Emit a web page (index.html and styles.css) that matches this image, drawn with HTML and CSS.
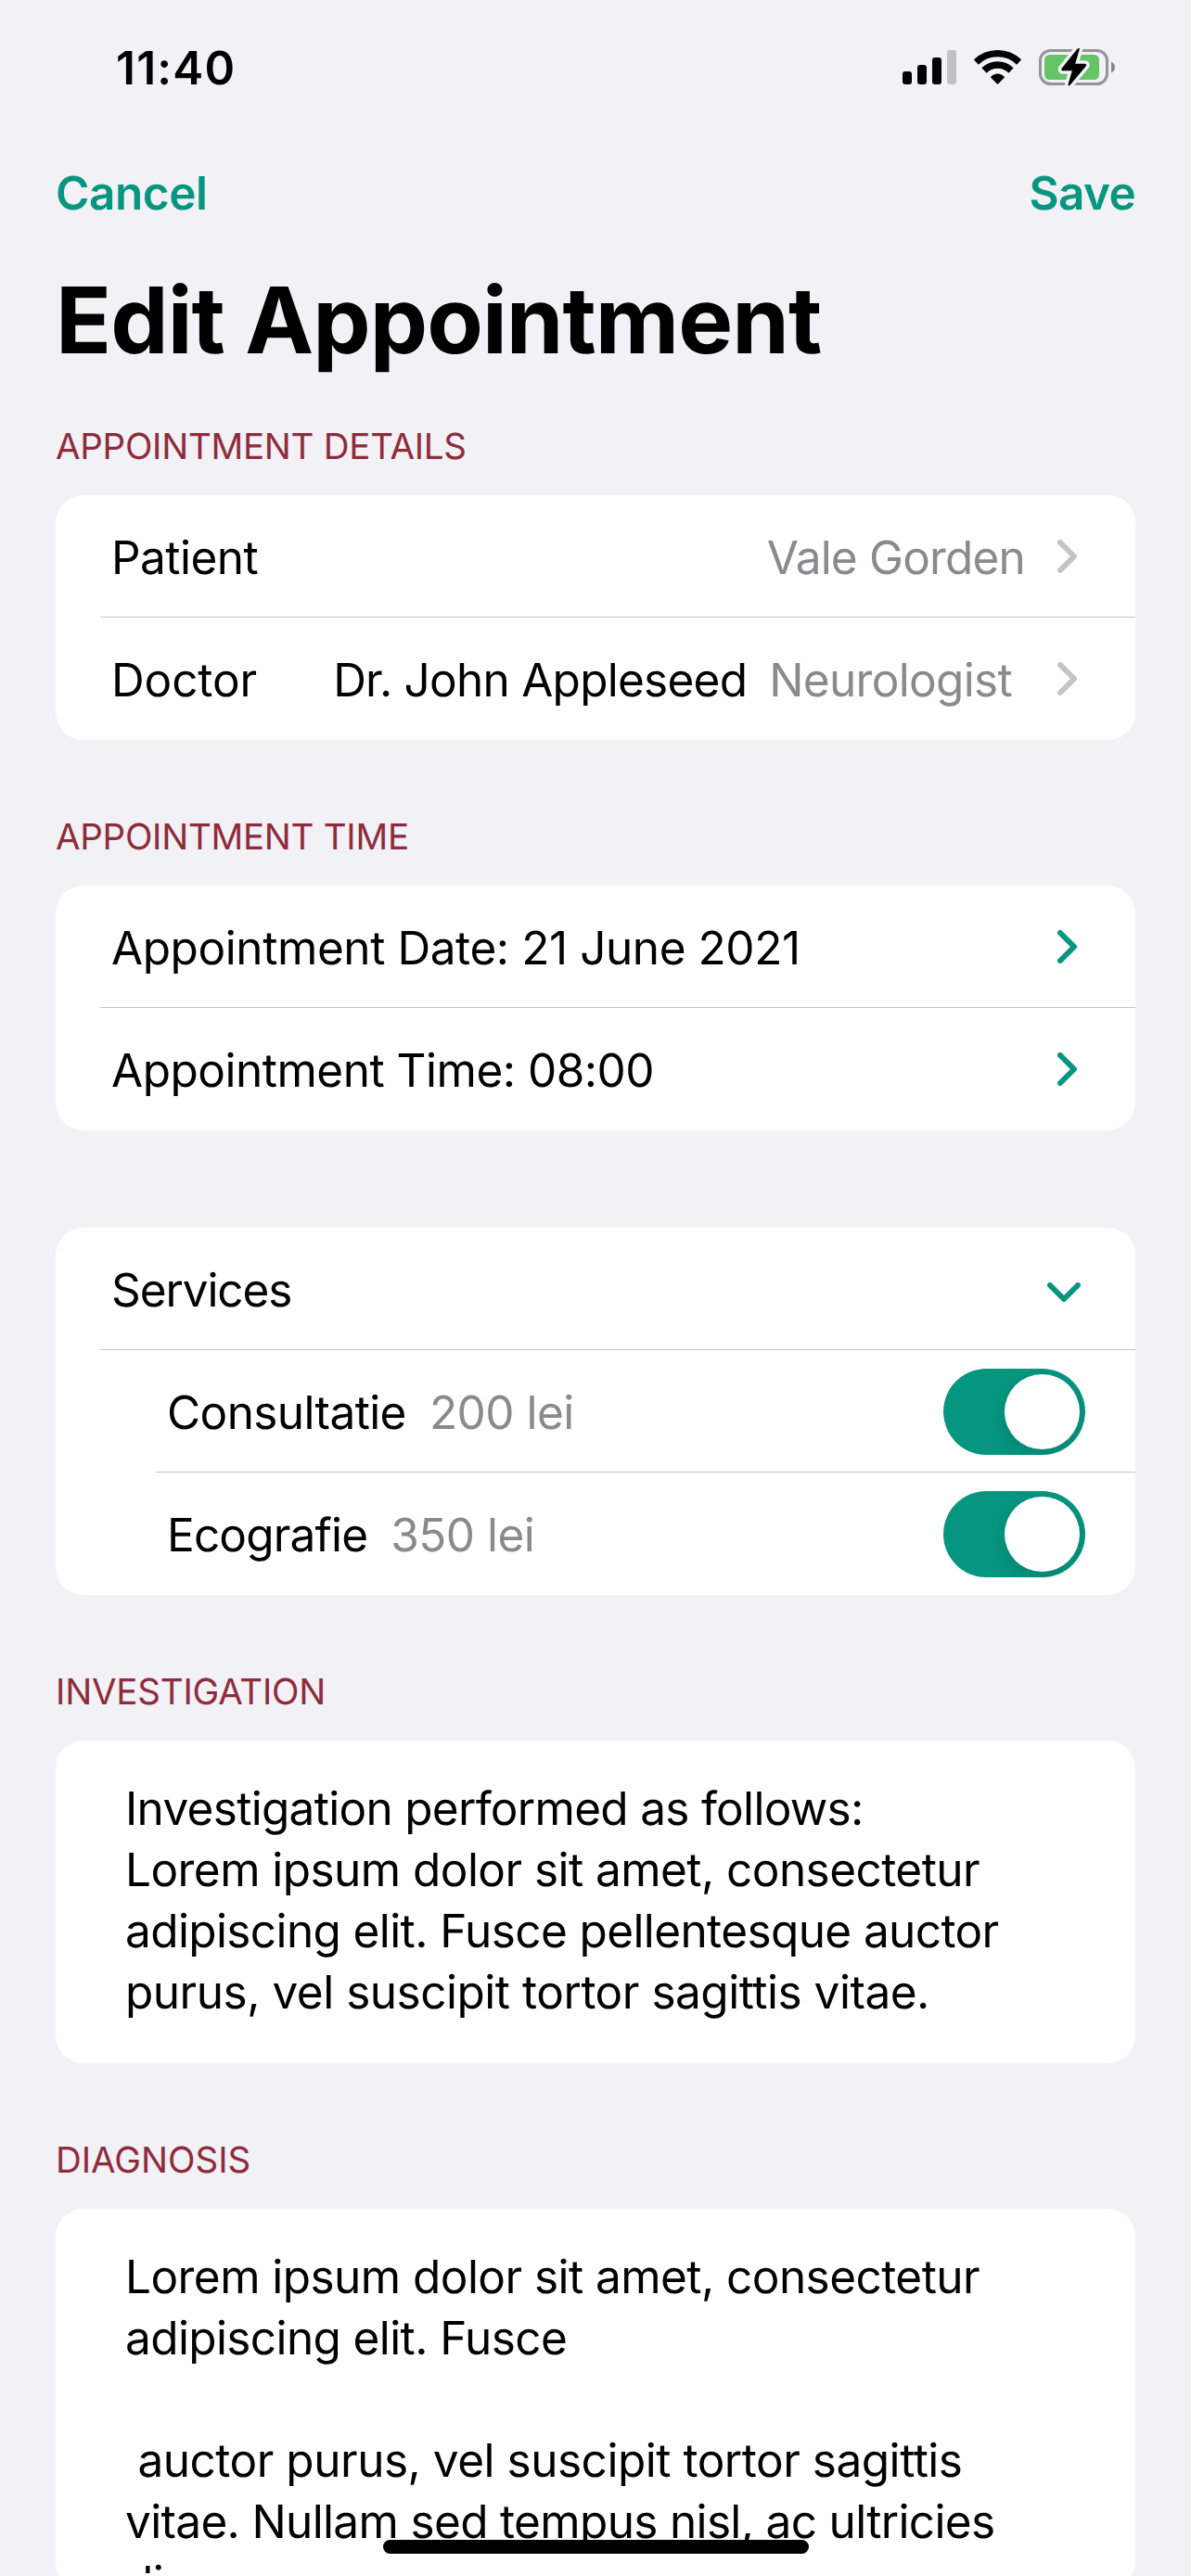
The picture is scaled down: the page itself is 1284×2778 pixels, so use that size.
FILE: index.html
```html
<!DOCTYPE html>
<html lang="en">
<head>
<meta charset="utf-8">
<title>Edit Appointment</title>
<link rel="stylesheet" href="styles.css">
</head>
<body>
<div class="screen">
  <div class="status-bar">
    <span class="clock">11:40</span>
    <svg class="status-icons" viewBox="0 0 230 44" width="230" height="44" aria-hidden="true">
      <rect x="0" y="27" width="10" height="14" rx="3"/>
      <rect x="16" y="20" width="10" height="21" rx="3"/>
      <rect x="32" y="12" width="10" height="29" rx="3"/>
      <rect x="48" y="4" width="10" height="37" rx="3" fill="#c0c0c5"/>
      <path d="M79.4 17A33.3 33.3 0 0 1 125.6 17" fill="none" stroke="#000" stroke-width="7.3"/>
      <path d="M88 26A20.8 20.8 0 0 1 117 26" fill="none" stroke="#000" stroke-width="7.5"/>
      <path d="M102.5 41L94.8 33.2Q98 29.4 102.5 29.4T110.2 33.2Z"/>
      <rect x="148.5" y="4.4" width="72" height="36.2" rx="11" fill="none" stroke="#949398" stroke-width="3"/>
      <path d="M225 16.5Q229 18.5 229 22.5T225 28.5Z" fill="#88888b"/>
      <rect x="153" y="9" width="59" height="27" rx="5.5" fill="#65c466"/>
      <path class="bolt" d="M191 2.6L186.2 18.8H197Q199 19.5 197.6 21.4L180.4 42Q178.6 43.2 178.4 41.4L182.8 26.2H172.2Q170.6 25.4 171.6 23.8L188.4 2.8Q190.4 1.4 191 2.6Z"/>
    </svg>
  </div>

  <nav class="nav">
    <a class="nav-action">Cancel</a>
    <a class="nav-action nav-save">Save</a>
  </nav>
  <h1 class="title">Edit Appointment</h1>

  <section class="group group-first">
    <h2 class="group-header tight">Appointment details</h2>
    <div class="card">
      <div class="row">
        <span class="label">Patient</span>
        <span class="detail detail-narrow">Vale Gorden</span>
        <svg class="chevron muted-icon" viewBox="0 0 21 36" width="21" height="36"><path d="M3 3L18 18L3 33"/></svg>
      </div>
      <div class="row">
        <span class="label label-wide">Doctor</span>
        <span class="doctor">Dr. John Appleseed</span>
        <span class="specialty">Neurologist</span>
        <svg class="chevron muted-icon" viewBox="0 0 21 36" width="21" height="36"><path d="M3 3L18 18L3 33"/></svg>
      </div>
    </div>
  </section>

  <section class="group">
    <h2 class="group-header tight">Appointment time</h2>
    <div class="card">
      <div class="row">
        <span class="label label-date">Appointment Date: 21 June 2021</span>
        <svg class="chevron" viewBox="0 0 21 36" width="21" height="36"><path d="M3 3L18 18L3 33"/></svg>
      </div>
      <div class="row">
        <span class="label label-time">Appointment Time: 08:00</span>
        <svg class="chevron" viewBox="0 0 21 36" width="21" height="36"><path d="M3 3L18 18L3 33"/></svg>
      </div>
    </div>
  </section>

  <section class="group group-plain">
    <div class="card">
      <div class="row">
        <span class="label label-services">Services</span>
        <svg class="chevron chevron-down" viewBox="0 0 36 21" width="36" height="21"><path d="M3 3L18 18L33 3"/></svg>
      </div>
      <div class="row row-nested">
        <span class="service">Consultatie</span>
        <span class="price">200 lei</span>
        <span class="toggle"><span class="knob"></span></span>
      </div>
      <div class="row row-nested">
        <span class="service service-narrow">Ecografie</span>
        <span class="price">350 lei</span>
        <span class="toggle"><span class="knob"></span></span>
      </div>
    </div>
  </section>

  <section class="group">
    <h2 class="group-header">Investigation</h2>
    <div class="card note">
      <p class="line line-heading">Investigation performed as follows:</p>
      <p class="line">Lorem ipsum dolor sit amet, consectetur</p>
      <p class="line line-narrow">adipiscing elit. Fusce pellentesque auctor</p>
      <p class="line line-wide">purus, vel suscipit tortor sagittis vitae.</p>
    </div>
  </section>

  <section class="group">
    <h2 class="group-header even">Diagnosis</h2>
    <div class="card note note-long">
      <div class="note-view">
        <p class="line">Lorem ipsum dolor sit amet, consectetur</p>
        <p class="line line-narrow">adipiscing elit. Fusce</p>
        <p class="line"> </p>
        <p class="line line-wide"> auctor purus, vel suscipit tortor sagittis</p>
        <p class="line line-closing">vitae. Nullam sed tempus nisl, ac ultricies</p>
        <p class="line">diam</p>
      </div>
    </div>
  </section>

  <div class="home-indicator"></div>
</div>
</body>
</html>
```
FILE: styles.css
```css
:root {
  --accent: #069680;
  --page: #f2f1f6;
  --muted: #8a8a8d;
  --header: #8e2c3b;
  --separator: #c5c5c7;
}

* {
  box-sizing: border-box;
}

body {
  margin: 0;
  background: var(--page);
}

.screen {
  position: relative;
  width: 1284px;
  height: 2778px;
  overflow: hidden;
  background: var(--page);
  color: #000;
  font-family: Inter, "Liberation Sans", sans-serif;
  font-size: 49.5px;
  letter-spacing: -0.55px;
  text-rendering: geometricPrecision;
  white-space: nowrap;
}

h1, h2, p {
  margin: 0;
}

/* Status bar and navigation */

.status-bar {
  display: flex;
  align-items: center;
  justify-content: space-between;
  height: 146px;
  padding: 0 81px 0 125px;
}

.clock {
  font-weight: 600;
  letter-spacing: 1.2px;
}

.status-icons {
  margin-bottom: 2px;
}

.bolt {
  stroke: var(--page);
  stroke-width: 7px;
  stroke-linejoin: round;
  paint-order: stroke;
}

.nav {
  display: flex;
  align-items: center;
  justify-content: space-between;
  height: 124px;
  padding: 0 60px;
}

.nav-action {
  color: var(--accent);
  font-weight: 560;
  letter-spacing: -0.45px;
}

.nav-save {
  letter-spacing: -0.7px;
}

.title {
  height: 150px;
  padding-left: 60px;
  font-size: 99px;
  font-weight: 700;
  line-height: 150px;
  letter-spacing: -0.95px;
}

/* Grouped list */

.group {
  margin: 51px 60px 0;
}

.group-first {
  margin-top: 8px;
}

.group-plain {
  margin-top: 105px;
}

.group-header {
  height: 106px;
  padding-top: 1px;
  color: var(--header);
  font-size: 38.5px;
  font-weight: 400;
  line-height: 106px;
  letter-spacing: -0.2px;
  text-transform: uppercase;
}

.group-header.tight {
  letter-spacing: -0.27px;
}

.group-header.even {
  letter-spacing: 0;
}

.card {
  border-radius: 30px;
  background: #fff;
}

.row {
  display: flex;
  align-items: center;
  height: 132px;
  padding: 0 63px 0 60px;
  background: linear-gradient(var(--separator), var(--separator)) 48px 131px / 100% 1px no-repeat;
}

.row-nested {
  padding: 0 54px 0 120px;
  background-position-x: 108px;
}

.row:last-child {
  background: none;
}

.row > span:not(.toggle) {
  padding-top: 1px;
}

.label-wide {
  letter-spacing: -0.11px;
}

.label-date {
  letter-spacing: -0.42px;
}

.label-time {
  letter-spacing: -0.49px;
}

.label-services {
  letter-spacing: -1.1px;
}

.detail {
  margin-left: auto;
  margin-right: 35px;
  color: var(--muted);
}

.detail-narrow {
  letter-spacing: -0.81px;
}

.doctor {
  margin-left: auto;
  letter-spacing: -0.75px;
}

.specialty {
  margin: 0 49px 0 24px;
  color: var(--muted);
  letter-spacing: -0.68px;
}

.service {
  letter-spacing: -0.6px;
}

.service-narrow {
  letter-spacing: -0.83px;
}

.price {
  margin-left: 25px;
  color: var(--muted);
  letter-spacing: -0.5px;
}

.chevron {
  flex: none;
  margin-left: auto;
  fill: none;
  stroke: var(--accent);
  stroke-width: 6px;
  stroke-linecap: round;
  stroke-linejoin: round;
}

.muted-icon {
  margin-left: 0;
  stroke: #c4c4c6;
}

.chevron-down {
  margin-top: 7px;
  margin-right: -4px;
}

.toggle {
  display: flex;
  justify-content: flex-end;
  width: 153px;
  height: 93px;
  margin: 1px 0 0 auto;
  padding: 6px;
  overflow: hidden;
  border-radius: 46.5px;
  background: var(--accent);
}

.knob {
  width: 81px;
  height: 81px;
  border-radius: 50%;
  background: #fff;
  box-shadow: 0 8px 22px rgba(0, 0, 0, 0.13);
}

/* Free-text notes */

.note {
  height: 348px;
  padding: 40px 75px 0;
}

.line {
  height: 66px;
  line-height: 66px;
  white-space: pre;
}

.line-heading {
  letter-spacing: -0.7px;
}

.line-narrow {
  letter-spacing: -0.61px;
}

.line-wide {
  letter-spacing: -0.48px;
}

.line-closing {
  letter-spacing: -0.66px;
}

.note-long {
  height: 411px;
}

.note-view {
  height: 353px;
  overflow: hidden;
}

.home-indicator {
  position: absolute;
  left: 413px;
  bottom: 24px;
  width: 459px;
  height: 15px;
  border-radius: 7.5px;
  background: #000;
}
```
